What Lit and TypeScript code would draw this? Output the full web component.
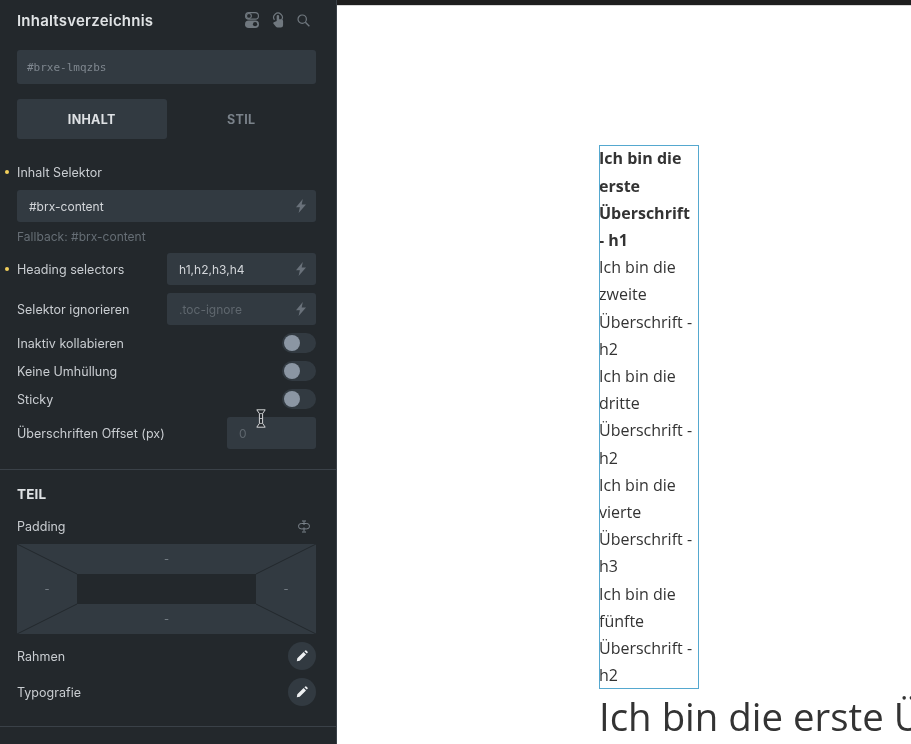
import { LitElement, html, css, svg } from "lit";
import { customElement } from "lit/decorators.js";

const bolt = html`<svg class="bolt" width="10" height="14" viewBox="0 0 10 14"><path d="M6.8 0 L0 8.2 H3.9 L2.6 14 L10 5.6 H5.7 Z" fill="currentColor"/></svg>`;
const pencil = html`<svg width="12" height="12" viewBox="0 0 12 12"><path d="M0.8 11.2 L1.3 8.3 L7.6 2 L10 4.4 L3.7 10.7 Z M8.4 1.2 L9.3 0.4 Q9.8 0 10.3 0.4 L11.6 1.7 Q12 2.2 11.6 2.7 L10.8 3.6 Z" fill="#eef0f2"/></svg>`;

@customElement("app-root")
export class AppRoot extends LitElement {
  static styles = css`
    :host { display: block; width: 911px; height: 744px; overflow: hidden; position: relative; background: #fff; }
    .page { display: flex; height: 744px; }
    .panel { width: 336px; flex: none; background: #23282c; border-right: 1px solid #3a4148; box-sizing: content-box;
      font-family: Inter, "Liberation Sans", sans-serif; font-size: 12.5px; font-weight: 400; color: #c9cdd1; letter-spacing: 0.02px; overflow: hidden; }
    .pad { padding: 0 20px 0 17px; will-change: transform; }
    .head { height: 40px; display: flex; align-items: center; justify-content: space-between; }
    .title { font-size: 15px; font-weight: 600; color: #e0e3e5; letter-spacing: 0.22px; }
    .icons { display: flex; align-items: center; gap: 13px; margin-right: 6px; color: #70787f; }
    .icons svg { display: block; }
    .field { background: #323a41; border-radius: 3px; display: flex; align-items: center; box-sizing: border-box; height: 32px; padding: 0 10px 0 12px; justify-content: space-between; color: #d3d6da; font-size: 12px; }
    .idf { margin-top: 10px; height: 34px; padding-left: 10px; font-family: "DejaVu Sans Mono", monospace; font-size: 11px; letter-spacing: 0; color: #7f878f; }
    .tabs { display: flex; margin-top: 15px; height: 40px; }
    .tab { width: 150px; display: flex; align-items: center; justify-content: center; font-size: 12.5px; font-weight: 700; color: #7a828a; letter-spacing: 0.3px; border-radius: 3px; }
    .tab.on { background: #323a41; color: #dee1e4; }
    .label { position: relative; line-height: 18px; padding-top: 1px; }
    .dot::before { content: ""; position: absolute; left: -12px; top: 7px; width: 4px; height: 4px; border-radius: 50%; background: #f2cf5b; }
    .sel { margin-top: 24px; }
    .full { margin-top: 8px; }
    .fallback { margin-top: 7px; line-height: 16px; color: #666e75; font-size: 12px; }
    .row { display: flex; align-items: center; justify-content: space-between; }
    .row .field { width: 149px; }
    .r1 { margin-top: 8px; }
    .r2 { margin-top: 8px; }
    .bolt { color: #69717a; display: block; }
    .ph { color: #5f676e; }
    .tog { margin-top: 8px; height: 20px; }
    .switch { width: 34px; height: 20px; border-radius: 10px; background: #323a41; position: relative; }
    .switch i { display: block; width: 16px; height: 16px; margin: 2px; border-radius: 50%; background: #8b96a3; }
    .off { margin-top: 8px; }
    .row.off .field { width: 89px; color: #5f676e; }
    hr { margin: 20px 0 0; border: 0; border-top: 1px solid #3a4148; height: 0; }
    .teil { margin-top: 15px; font-size: 13.5px; font-weight: 700; color: #dee1e4; line-height: 18px; letter-spacing: 0.2px; }
    .plabel { margin-top: 14px; height: 18px; }
    .box { position: relative; margin-top: 9px; width: 299px; height: 90px; background: #323a41; display: grid; grid-template-columns: 60px 1fr 60px; grid-template-rows: 30px 30px 30px; text-align: center; color: #7a828a; font-size: 11px; line-height: 30px; }
    .box svg { position: absolute; inset: 0; }
    .box .mid { background: #23282c; }
    .box span { position: relative; }
    .btn { width: 28px; height: 28px; border-radius: 50%; background: #323a41; display: flex; align-items: center; justify-content: center; }
    .rb { margin-top: 8px; height: 28px; }
    .last { margin-top: 20px; }

    .canvas { flex: 1; position: relative; min-width: 0; overflow: hidden; }
    .bar { background: #1e1e1e; box-sizing: content-box; height: 5px; border-bottom: 1px solid #d8d8d8; }
    .content { padding: 139px 0 0 262px; font-family: "Open Sans", "Noto Sans", sans-serif; color: #333; will-change: transform; }
    .toc { width: 100px; box-sizing: border-box; height: 544px; padding-top: 0.4px; outline: 1px solid #55a8cf; outline-offset: -1px; font-size: 16px; line-height: 27.2px; }
    .toc b { font-weight: 700; display: block; }
    h1 { margin: 3px 0 0 0; font-weight: 400; font-size: 38.4px; line-height: 48px; white-space: nowrap; color: #333; }
    .cursor { position: absolute; left: 256px; top: 409px; }
  `;

  render() {
    return html`
      <div class="page">
        <aside class="panel">
          <div class="pad">
            <div class="head">
              <div class="title">Inhaltsverzeichnis</div>
              <div class="icons">
                <svg width="14" height="16" viewBox="0 0 15 17">
                  <rect x="0.6" y="0.6" width="13.8" height="7" rx="3.5" fill="none" stroke="currentColor" stroke-width="1.2"/>
                  <circle cx="4.2" cy="4.1" r="2.6" fill="none" stroke="currentColor" stroke-width="1.2"/>
                  <rect y="9" width="15" height="8" rx="4" fill="currentColor"/>
                  <circle cx="10.8" cy="13" r="2.3" fill="#23282c"/>
                </svg>
                <svg width="12" height="16" viewBox="0 0 12 17">
                  <path d="M2.2 8.4 A4.6 4.6 0 1 1 9.8 8.4" fill="none" stroke="currentColor" stroke-width="1.2"/>
                  <path d="M4.6 9.6 V4.6 a1.3 1.3 0 0 1 2.6 0 V7.6 H9.6 Q11.4 7.8 11.4 9.6 V14 Q11.4 16.6 9 16.6 H5.6 Q4.4 16.6 3.6 15.4 L1 12.2 Q0.6 10.6 2.2 10.6 Z" fill="currentColor"/>
                </svg>
                <svg width="13" height="13" viewBox="0 0 14 14">
                  <circle cx="5.6" cy="5.6" r="4.5" fill="none" stroke="currentColor" stroke-width="1.3"/>
                  <path d="M9 9 L13.3 13.3" stroke="currentColor" stroke-width="1.5"/>
                </svg>
              </div>
            </div>
            <div class="field idf">#brxe-lmqzbs</div>
            <div class="tabs">
              <div class="tab on">INHALT</div>
              <div class="tab">STIL</div>
            </div>
            <div class="label dot sel">Inhalt Selektor</div>
            <div class="field full"><span>#brx-content</span>${bolt}</div>
            <div class="fallback">Fallback: #brx-content</div>
            <div class="row r1"><div class="label dot">Heading selectors</div><div class="field"><span>h1,h2,h3,h4</span>${bolt}</div></div>
            <div class="row r2"><div class="label">Selektor ignorieren</div><div class="field"><span class="ph">.toc-ignore</span>${bolt}</div></div>
            <div class="row tog"><div class="label">Inaktiv kollabieren</div><div class="switch"><i></i></div></div>
            <div class="row tog"><div class="label">Keine Umhüllung</div><div class="switch"><i></i></div></div>
            <div class="row tog"><div class="label">Sticky</div><div class="switch"><i></i></div></div>
            <div class="row off"><div class="label">Überschriften Offset (px)</div><div class="field"><span>0</span></div></div>
          </div>
          <hr />
          <div class="pad">
            <div class="teil">TEIL</div>
            <div class="row plabel">
              <div class="label">Padding</div>
              <svg style="margin-right:6px" width="12" height="13" viewBox="0 0 12 13"><g fill="none" stroke="#7b838b" stroke-width="1"><rect x="0.5" y="3.5" width="11" height="5.4" rx="2.7"/><path d="M6 1.2 V5 M6 7.4 V11.4 M4 1 H8 M4 12 H8"/></g></svg>
            </div>
            <div class="box">
              <svg width="299" height="90" viewBox="0 0 299 90">${svg`<path d="M0 0 L60 30 M299 0 L239 30 M0 90 L60 60 M299 90 L239 60" stroke="#23282c" stroke-width="1"/>`}</svg>
              <span></span><span>-</span><span></span>
              <span>-</span><div class="mid"></div><span>-</span>
              <span></span><span>-</span><span></span>
            </div>
            <div class="row rb"><div class="label">Rahmen</div><div class="btn">${pencil}</div></div>
            <div class="row rb"><div class="label">Typografie</div><div class="btn">${pencil}</div></div>
          </div>
          <hr class="last" />
        </aside>
        <main class="canvas">
          <div class="bar"></div>
          <div class="content">
            <div class="toc">
              <b>Ich bin die erste Überschrift - h1</b>
              <div>Ich bin die zweite Überschrift - h2</div>
              <div>Ich bin die dritte Überschrift - h2</div>
              <div>Ich bin die vierte Überschrift - h3</div>
              <div>Ich bin die fünfte Überschrift - h2</div>
            </div>
            <h1>Ich bin die erste Überschrift - h1</h1>
          </div>
        </main>
      </div>
      <svg class="cursor" width="10" height="19" viewBox="0 0 10 19">
        <path d="M0.8 0.8 H9.2 L6.6 4.6 V14.4 L9.2 18.2 H0.8 L3.4 14.4 V4.6 Z" fill="#23282c" stroke="#d4d6d8" stroke-width="1"/>
        <path d="M3.6 4.6 H6.4 M3.6 9.5 H6.4 M3.6 14.4 H6.4" stroke="#d4d6d8" stroke-width="0.8"/>
      </svg>
    `;
  }
}
